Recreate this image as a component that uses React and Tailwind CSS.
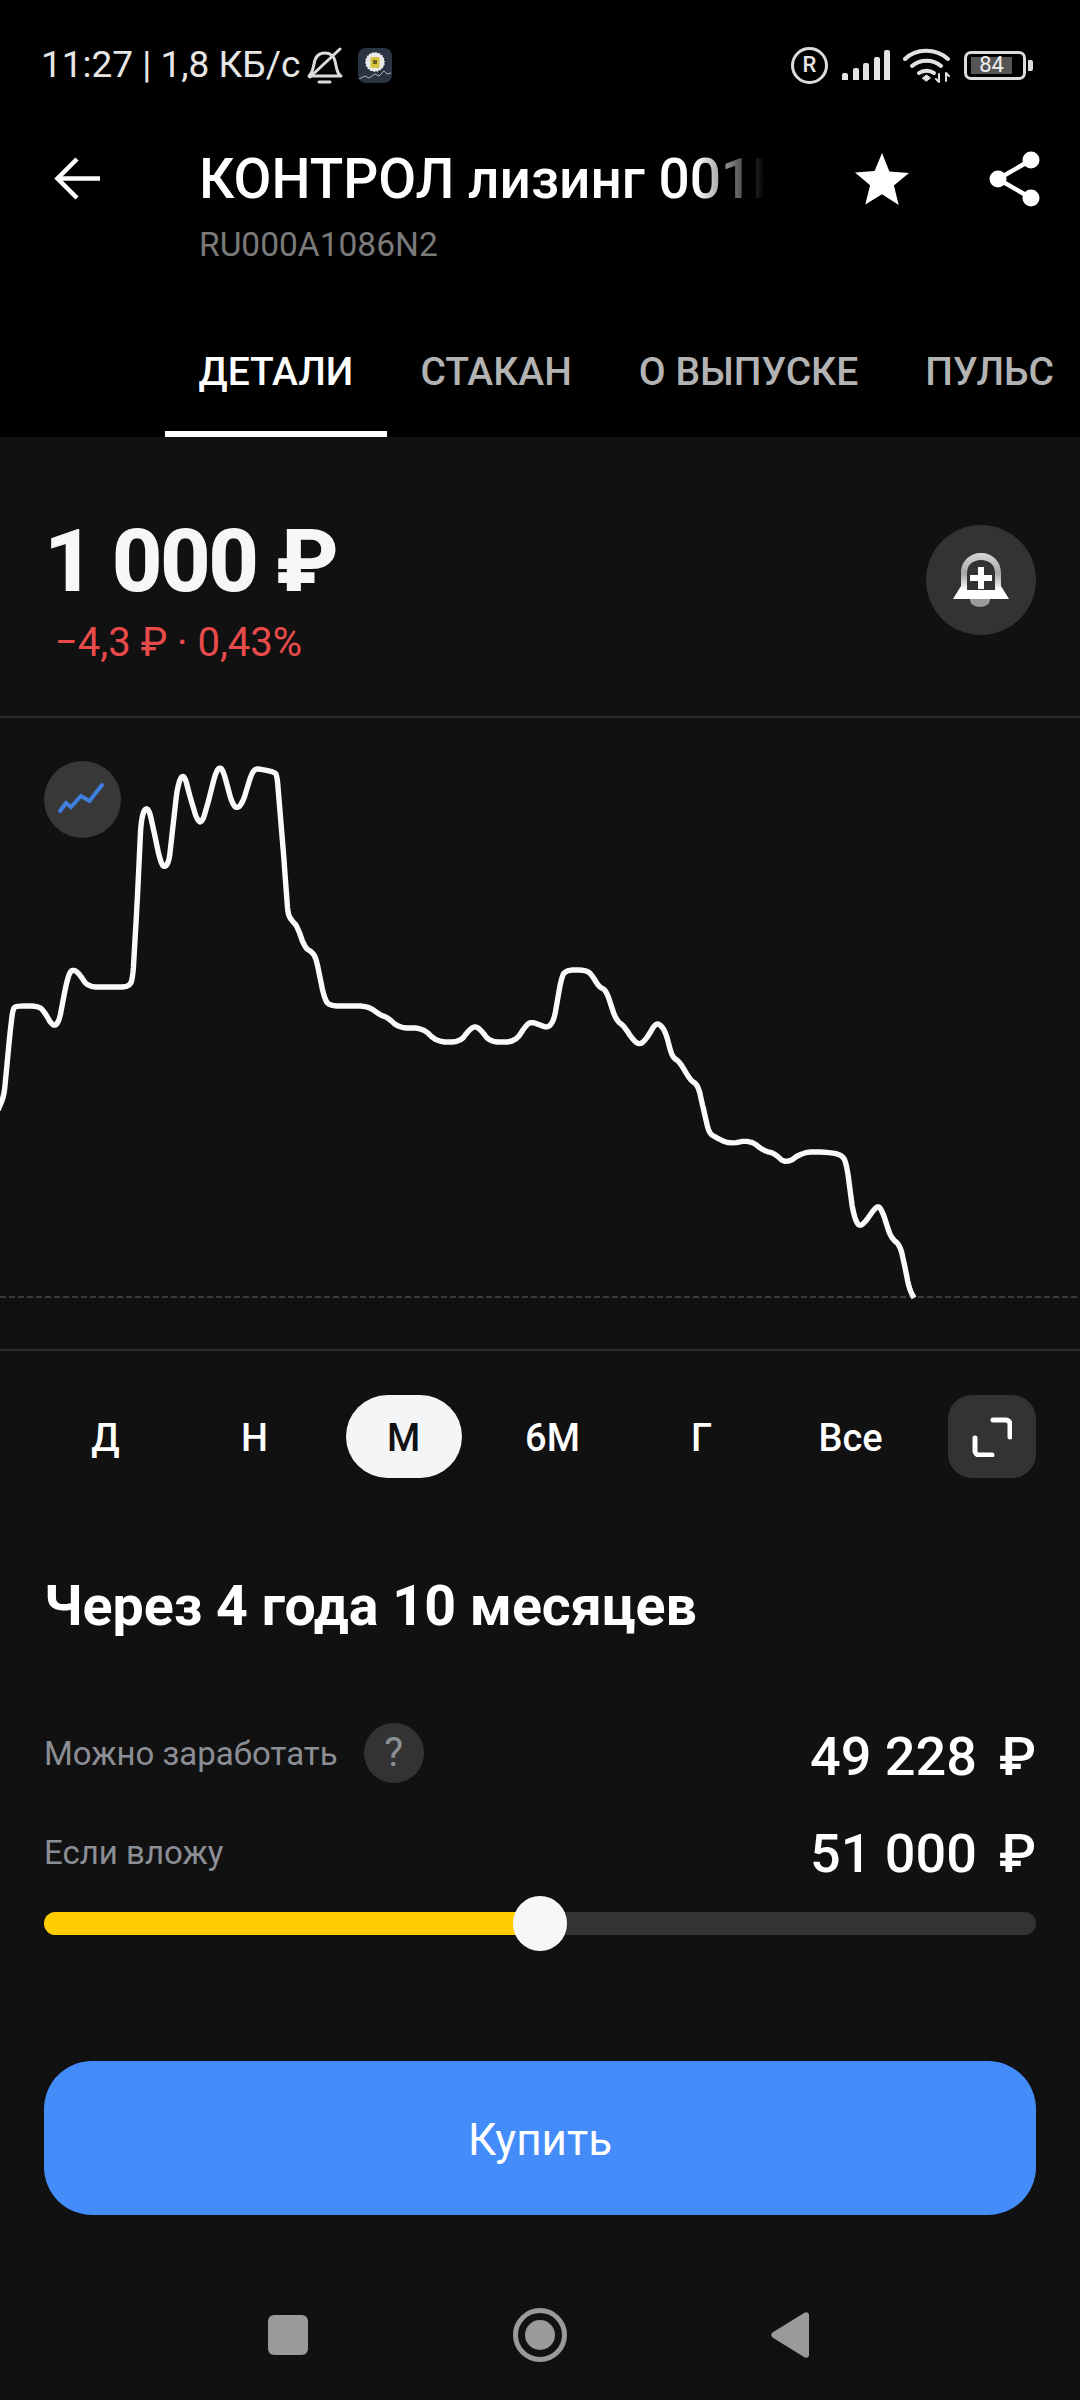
import React from "react";

const CHART = [[-2,1110],[4,1096],[10,1033],[13,1008],[17,1006],[38,1006],[44,1011],[53,1027],[59,1022],[66,985],[70,971],[75,970],[80,975],[88,987],[130,987],[133,975],[137,905],[141,823],[144,809],[149,809],[153,827],[160,860],[164,868],[169,862],[177,790],[181,776],[185,777],[189,793],[197,820],[202,823],[208,803],[215,775],[219,767],[223,770],[232,803],[237,809],[243,802],[251,775],[255,769],[260,769],[274,772],[277,775],[284,860],[288,915],[293,922],[297,926],[305,948],[312,952],[316,958],[324,997],[329,1006],[368,1006],[380,1015],[387,1017],[399,1028],[423,1028],[437,1042],[460,1042],[469,1030],[475,1026],[481,1030],[490,1042],[515,1042],[527,1024],[532,1022],[540,1025],[548,1028],[554,1020],[561,980],[565,970],[586,970],[592,975],[599,987],[606,990],[616,1020],[624,1026],[633,1040],[640,1045],[647,1038],[655,1024],[660,1024],[666,1033],[672,1057],[680,1062],[690,1080],[698,1085],[703,1107],[709,1133],[715,1137],[729,1144],[750,1140],[764,1151],[774,1153],[786,1164],[803,1152],[827,1152],[843,1155],[847,1167],[853,1212],[858,1226],[864,1224],[877,1205],[882,1210],[891,1238],[900,1245],[905,1267],[909,1288],[914,1298]];

// rounds the corners of the traced line, two passes of corner cutting
function roundedLine(pts) {
  let out = pts;
  for (let pass = 0; pass < 2; pass++) {
    const next = [out[0]];
    for (let i = 0; i < out.length - 1; i++) {
      const [ax, ay] = out[i];
      const [bx, by] = out[i + 1];
      const len = Math.hypot(bx - ax, by - ay) || 1;
      const t = Math.min(0.25, (pass === 0 ? 5 : 2.5) / len);
      next.push([ax + (bx - ax) * t, ay + (by - ay) * t]);
      next.push([bx - (bx - ax) * t, by - (by - ay) * t]);
    }
    next.push(out[out.length - 1]);
    out = next;
  }
  return "M" + out.map((p) => `${p[0].toFixed(1)} ${p[1].toFixed(1)}`).join("L");
}

function StatusBar() {
  return (
    <div className="flex items-center h-[38px] mt-[46px] pl-[41px] text-[#e6e6e6]">
      <span className="text-[37px] leading-[38px] whitespace-nowrap w-[266px]">11:27 | 1,8 КБ/с</span>
      <svg width="36" height="37" viewBox="0 0 36 37" fill="none" stroke="#dcdcdc" strokeWidth="3" strokeLinecap="round" strokeLinejoin="round">
        <path d="M2 29c3-3 4-6 5-12 1-7 5-11 11-11 5 0 9 3 10 8l2 9c1 3 2 5 4 6z" />
        <path d="M12 35h11" />
        <path d="M33 2 3 30" />
      </svg>
      <div className="ml-[15px] w-[34px] h-[35px] rounded-[8px] bg-[#2b3442] overflow-hidden">
        <svg width="34" height="35" viewBox="0 0 34 35">
          <circle cx="17" cy="14" r="10" fill="#e9e9e9" />
          <circle cx="17" cy="14" r="10" fill="none" stroke="#2b3442" strokeWidth="1.5" strokeDasharray="1.5 2" />
          <rect x="12.5" y="9" width="9" height="11" rx="1" fill="#d8c43c" />
          <rect x="15" y="12" width="4" height="4" fill="#6b6320" />
          <path d="M1 31l6-3 4 2 6-4 4 2 5-5 3 3 4-1" fill="none" stroke="#cfd3d8" strokeWidth="0.8" />
        </svg>
      </div>
      <div className="ml-[399px] w-[37px] h-[37px] rounded-full border-[3px] border-[#dcdcdc] flex items-center justify-center text-[22px] leading-none font-medium">R</div>
      <div className="ml-[14px] flex items-end gap-[4.5px] h-[30px]">
        <div className="w-[6px] h-[7px] rounded-t-[2px] bg-[#e2e2e2]" />
        <div className="w-[6px] h-[12px] rounded-t-[2px] bg-[#e2e2e2]" />
        <div className="w-[6px] h-[17px] rounded-t-[2px] bg-[#e2e2e2]" />
        <div className="w-[6px] h-[23px] rounded-t-[2px] bg-[#e2e2e2]" />
        <div className="w-[6px] h-[30px] rounded-t-[2px] bg-[#e2e2e2]" />
      </div>
      <svg width="47" height="35" viewBox="0 0 47 35" fill="none" stroke="#e2e2e2" strokeLinecap="round" className="ml-[13px]">
        <path d="M2 11C13 0 33 0 45 11" strokeWidth="4" />
        <path d="M9 18c8-7 21-7 29 0" strokeWidth="4" />
        <path d="M16 25c4-3 11-3 15 0" strokeWidth="4" />
        <path d="M19.5 30l4-3 4 3-4 3z" fill="#e2e2e2" strokeWidth="1" />
        <path d="M36 26v8M33 31l3 3M43 25v8M43 25l3 3" strokeWidth="2" />
      </svg>
      <div className="ml-[14px] flex items-center">
        <div className="w-[62px] h-[29px] rounded-[7px] border-[3px] border-[#dcdcdc] flex items-center pl-[4px]">
          <div className="w-[41px] h-[17px] bg-[#555] flex items-center justify-center text-[22px] leading-none text-[#eee]">84</div>
        </div>
        <div className="ml-[2px] w-[5px] h-[11px] rounded-r-[2px] bg-[#dcdcdc]" />
      </div>
    </div>
  );
}

function Header() {
  return (
    <div className="flex items-start mt-[65px] h-[116px]">
      <svg width="46" height="44" viewBox="0 0 46 44" fill="none" stroke="#fff" strokeWidth="4.5" className="ml-[54px] mt-[8px]">
        <path d="M46 21.5H5" />
        <path d="M23 2 3.500 21.500 23 41" />
      </svg>
      <div className="ml-[99px] w-[571px] overflow-hidden">
        <div className="text-[55px] leading-[60px] font-medium text-white whitespace-nowrap [mask-image:linear-gradient(to_right,black_87%,transparent_99%)]">КОНТРОЛ лизинг 001Р3</div>
        <div className="mt-[16px] text-[33.5px] leading-[40px] text-[#7a7a7a]">RU000A1086N2</div>
      </div>
      <svg width="54" height="52" viewBox="0 0 54 52" fill="#fff" className="ml-[85px] mt-[4px]">
        <path d="M27 0l7.400 18.500 19.600 1.400-15.100 12.700 4.800 19.400L27 41.200 10.300 51.600l4.800-19.400L0 19.500l19.600-1.400z" />
      </svg>
      <svg width="52" height="56" viewBox="0 0 52 56" className="ml-[80px] mt-[2px]">
        <path d="M42 9 9 28l33 19" fill="none" stroke="#fff" strokeWidth="4.5" />
        <circle cx="42" cy="9" r="8.500" fill="#fff" />
        <circle cx="9" cy="28" r="8.500" fill="#fff" />
        <circle cx="42" cy="47" r="8.500" fill="#fff" />
      </svg>
    </div>
  );
}

function Tabs() {
  const tabs = ["ДЕТАЛИ", "СТАКАН", "О ВЫПУСКЕ", "ПУЛЬС"];
  return (
    <div className="flex mt-auto pl-[165px] whitespace-nowrap">
      {tabs.map((t, i) => (
        <div key={t} className={`h-[130px] pt-[6px] px-[33.5px] flex items-center text-[39px] font-medium border-b-[6px] ${i === 0 ? "border-white text-white" : "border-transparent text-[#b3b3b3]"}`}>{t}</div>
      ))}
    </div>
  );
}

function PriceBlock() {
  return (
    <div className="flex justify-between items-start h-[281px] pl-[44px] pr-[44px] border-b-2 border-[#2b2b2b]">
      <div className="pt-[80px]">
        <div className="text-[88px] leading-[88px] font-extrabold tracking-[-2.5px] text-[#f6f7f8] whitespace-nowrap">1 000 ₽</div>
        <div className="mt-[16px] ml-[11px] text-[40px] leading-[44px] text-[#e94b4b] whitespace-nowrap">−4,3 ₽ · 0,43%</div>
      </div>
      <div className="mt-[88px] w-[110px] h-[110px] rounded-full bg-[#333] flex items-center justify-center">
        <svg width="56" height="54" viewBox="0 0 56 54">
          <defs>
            <linearGradient id="bellShade" x1="0" y1="0" x2="0" y2="1">
              <stop offset="0" stopColor="#d6d6d6" />
              <stop offset="0.45" stopColor="#a8a8a8" />
              <stop offset="0.8" stopColor="#ffffff" />
            </linearGradient>
          </defs>
          <path d="M17 46h20v1a10 7 0 0 1-20 0z" fill="#9b9b9b" />
          <path d="M0 46 8 33V20C8 8 17 0 28 0s20 8 20 20v13l8 13z" fill="url(#bellShade)" />
          <path d="M14 37V20C14 12 20 7 28 7s14 5 14 13v17z" fill="#333" />
          <path d="M25 14h6v8h8v6h-8v8h-6v-8h-8v-6h8z" fill="#fff" />
        </svg>
      </div>
    </div>
  );
}

function Chart() {
  return (
    <div className="relative h-[633px] border-b-2 border-[#2b2b2b]">
      <svg width="1080" height="631" viewBox="0 718 1080 631" fill="none" className="block">
        <path d="M0 1297H1080" stroke="#3a3a3a" strokeWidth="2" strokeDasharray="6 3" />
        <path d={roundedLine(CHART)} stroke="#fafafa" strokeWidth="5.4" strokeLinejoin="round" />
      </svg>
      <div className="absolute left-[44px] top-[43px] w-[77px] h-[77px] rounded-full bg-[#383838]">
        <svg width="77" height="77" viewBox="0 0 77 77" fill="none" stroke="#3f7fe0" strokeWidth="4" strokeLinecap="round">
          <path d="M16 50l6-8 5 4 10-11 8.500 5L58 24" />
        </svg>
      </div>
    </div>
  );
}

function Periods() {
  const items = ["Д", "Н", "М", "6М", "Г", "Все"];
  return (
    <div className="flex mt-[44px] pl-[31px] pr-[44px] h-[83px]">
      {items.map((p) => (
        <div key={p} className="w-[149px] flex justify-center">
          <div className={`h-[83px] pt-[4px] flex items-center justify-center text-[38px] font-medium ${p === "М" ? "w-[116px] rounded-full bg-[#f4f5f7] text-[#111112]" : "text-white"}`}>{p}</div>
        </div>
      ))}
      <div className="ml-[23px] w-[88px] h-[83px] rounded-[24px] bg-[#333] flex items-center justify-center">
        <svg width="40" height="40" viewBox="0 0 40 40" fill="none" stroke="#fff" strokeWidth="5" strokeLinecap="round">
          <path d="M21 3h13a4 4 0 0 1 4 4v13" />
          <path d="M3 21v13a4 4 0 0 0 4 4h13" />
        </svg>
      </div>
    </div>
  );
}

function Amount({ value }) {
  return (
    <div className="flex pt-[2px] text-[54px] font-medium text-white whitespace-nowrap">
      <span>{value}</span>
      <span className="ml-[22px]">₽</span>
    </div>
  );
}

function Calculator() {
  return (
    <div className="px-[44px]">
      <div className="mt-[98px] text-[55.5px] leading-[61px] font-bold text-white whitespace-nowrap">Через 4 года 10 месяцев</div>
      <div className="mt-[88px] h-[60px] flex items-center justify-between">
        <div className="flex items-center">
          <span className="-mt-[2px] text-[33px] text-[#8b8e94]">Можно заработать</span>
          <div className="ml-[26px] -mt-[4px] w-[60px] h-[60px] rounded-full bg-[#333] flex items-center justify-center text-[40px] text-[#8b8e94]">?</div>
        </div>
        <Amount value="49 228" />
      </div>
      <div className="mt-[37px] h-[60px] flex items-center justify-between">
        <span className="pt-[2px] text-[33px] text-[#8b8e94]">Если вложу</span>
        <Amount value="51 000" />
      </div>
      <div className="relative mt-[14px] h-[55px] flex items-center">
        <div className="w-full h-[23px] rounded-full bg-[#333] overflow-hidden">
          <div className="w-1/2 h-full bg-[#ffcc00]" />
        </div>
        <div className="absolute left-[469px] top-0 w-[54px] h-[55px] rounded-full bg-[#f6f7f8]" />
      </div>
      <div className="mt-[110px] h-[154px] pt-[3px] rounded-[48px] bg-[#458cfb] flex items-center justify-center text-[44px] text-white">Купить</div>
    </div>
  );
}

function NavBar() {
  return (
    <div className="mt-[93px] flex items-center pl-[268px] h-[54px]">
      <div className="w-[40px] h-[40px] rounded-[6px] bg-[#9a9a9a]" />
      <svg width="54" height="54" viewBox="0 0 54 54" className="ml-[205px]">
        <circle cx="27" cy="27" r="24.500" fill="none" stroke="#9a9a9a" strokeWidth="5" />
        <circle cx="27" cy="27" r="15" fill="#9a9a9a" />
      </svg>
      <svg width="38" height="46" viewBox="0 0 38 46" className="ml-[204px]">
        <path d="M1.500 25.500a3.500 3.500 0 0 1 0-5L33 1c2-1.500 5-.5 5 2v40c0 2.500-3 3.500-5 2z" fill="#9a9a9a" />
      </svg>
    </div>
  );
}

export default function App() {
  return (
    <div className="w-[1080px] h-[2400px] overflow-hidden bg-[#111112] [font-family:Roboto,sans-serif]">
      <div className="h-[437px] bg-black flex flex-col overflow-hidden">
        <StatusBar />
        <Header />
        <Tabs />
      </div>
      <PriceBlock />
      <Chart />
      <Periods />
      <Calculator />
      <NavBar />
    </div>
  );
}
